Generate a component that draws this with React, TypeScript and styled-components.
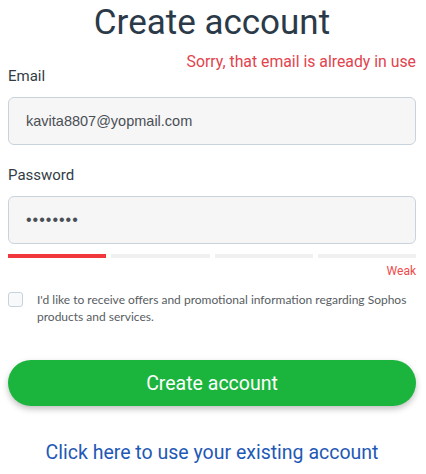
import React from "react";
import styled, { createGlobalStyle } from "styled-components";

const GlobalStyle = createGlobalStyle`
  body {
    margin: 0;
    background: #ffffff;
    font-family: Roboto, "Noto Sans", sans-serif;
  }
`;

const Page = styled.div`
  width: 426px;
  padding: 0 10px 0 8px;
  box-sizing: border-box;
  display: flex;
  flex-direction: column;
`;

const Title = styled.h1`
  margin: 0;
  padding-top: 1px;
  text-align: center;
  font-size: 35px;
  line-height: 44px;
  font-weight: 400;
  color: #2b3a48;
`;

const ErrorText = styled.div`
  margin-top: 8px;
  text-align: right;
  font-size: 15.8px;
  line-height: 18px;
  color: #e2434d;
`;

const Label = styled.label<{ $top: number }>`
  display: block;
  margin-top: ${(p) => p.$top}px;
  font-size: 15px;
  line-height: 18px;
  color: #333c44;
`;

const Input = styled.div<{ $secret?: boolean }>`
  margin-top: 12px;
  height: 48px;
  box-sizing: border-box;
  border: 1px solid #c9d3dd;
  border-radius: 6px;
  background: #f6f6f6;
  display: flex;
  align-items: center;
  padding-left: 17px;
  font-family: "Liberation Sans", Arial, sans-serif;
  font-size: ${(p) => (p.$secret ? "16px" : "14.5px")};
  letter-spacing: ${(p) => (p.$secret ? "1px" : "0")};
  color: #4a4f55;
`;

const Meter = styled.div`
  margin-top: 10px;
  display: grid;
  grid-template-columns: repeat(4, 1fr);
  gap: 5px;
`;

const Segment = styled.div<{ $on?: boolean }>`
  height: 4px;
  background: ${(p) => (p.$on ? "#f0383c" : "#f0f0f0")};
`;

const Strength = styled.div`
  margin-top: 6px;
  text-align: right;
  font-size: 12px;
  line-height: 15px;
  color: #f04a4a;
`;

const CheckRow = styled.div`
  margin-top: 12px;
  display: flex;
  gap: 14px;
  align-items: flex-start;
`;

const Box = styled.span`
  flex: none;
  width: 15px;
  height: 15px;
  margin-top: 1px;
  box-sizing: border-box;
  border: 1.5px solid #c6d2de;
  border-radius: 3px;
  background: #f8f9fb;
`;

const CheckText = styled.span`
  font-family: Lato, "Noto Sans", sans-serif;
  font-size: 12px;
  line-height: 17px;
  color: #585d62;
`;

const Button = styled.button`
  margin-top: 35px;
  height: 46px;
  border: none;
  border-radius: 23px;
  background: #1bb53d;
  color: #ffffff;
  font-family: Roboto, sans-serif;
  font-size: 19.5px;
  box-shadow: 0 3px 6px rgba(0, 0, 0, 0.25);
`;

const Link = styled.a`
  margin-top: 36px;
  text-align: center;
  font-size: 19.5px;
  line-height: 22px;
  color: #1f59b5;
  text-decoration: none;
`;

export default function App() {
  return (
    <>
      <GlobalStyle />
      <Page>
        <Title>Create account</Title>
        <ErrorText>Sorry, that email is already in use</ErrorText>
        <Label $top={-4}>Email</Label>
        <Input>kavita8807@yopmail.com</Input>
        <Label $top={21}>Password</Label>
        <Input $secret>••••••••</Input>
        <Meter>
          <Segment $on />
          <Segment />
          <Segment />
          <Segment />
        </Meter>
        <Strength>Weak</Strength>
        <CheckRow>
          <Box />
          <CheckText>
            I'd like to receive offers and promotional information regarding Sophos products and
            services.
          </CheckText>
        </CheckRow>
        <Button>Create account</Button>
        <Link>Click here to use your existing account</Link>
      </Page>
    </>
  );
}
